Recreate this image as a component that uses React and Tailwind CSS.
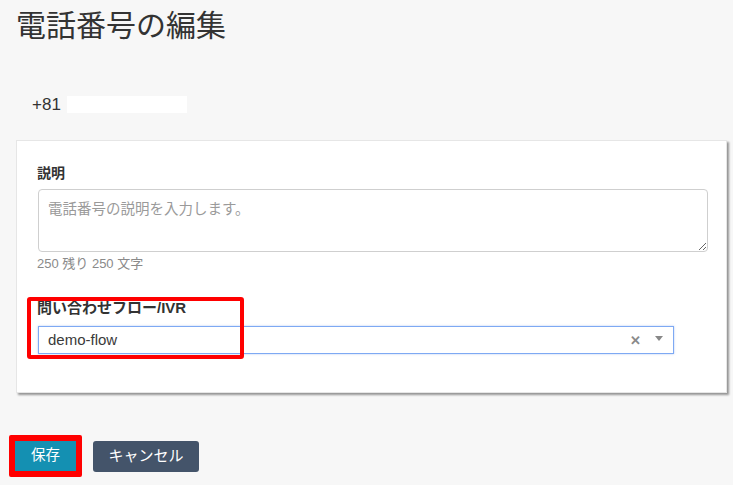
import React from 'react';

const font = "font-['Liberation_Sans','Noto_Sans_CJK_JP',sans-serif]";

const App = () => {
  return (
    <div className={`min-h-screen bg-[#f7f7f7] text-[#333] ${font} pt-[6px]`}>
      {/* ─── TITLE ─── */}
      <h1 className="pl-[16px] text-[30px] leading-[40px] font-normal text-[#333]">電話番号の編集</h1>

      {/* phone number, masked */}
      <div className="mt-[50px] pl-[32px] flex items-center gap-[6px] h-[17px]">
        <span className="text-[17px] leading-[17px] text-[#333]">+81</span>
        <div className="w-[120px] h-[17px] bg-white" />
      </div>

      {/* ─── CARD ─── */}
      <div className="relative ml-[16px] mt-[27px] w-[711px] h-[253px] bg-white border border-[#e6e6e6] shadow-[2px_2px_2px_rgba(0,0,0,0.4)] pl-[20px] pt-[22px]">
        <label className="block text-[14px] leading-[20px] font-bold text-[#333]">説明</label>
        <textarea
          className="mt-[6px] ml-[1px] block w-[670px] h-[63px] border border-[#cfcfcf] rounded-[4px] px-[9px] py-[9px] text-[14.5px] leading-[20px] placeholder:text-[#9a9a9a] outline-none"
          placeholder="電話番号の説明を入力します。"
        />
        <div className="mt-[3px] text-[13px] leading-[18px] text-[#8a8a8a]">250 残り 250 文字</div>

        <label className="block mt-[25px] text-[15px] leading-[20px] font-bold text-[#333]">問い合わせフロー/IVR</label>
        <div className="mt-[8px] ml-[1px] w-[636px] h-[28px] border border-[#7ea9f3] shadow-[0_0_2px_rgba(110,150,230,0.5)] flex items-center pl-[9px] pr-[10px]">
          <span className="flex-1 text-[15px] text-[#3a3a3a]">demo-flow</span>
          <span className="text-[#8a8a8a] text-[13px] font-bold leading-none mr-[14px]">✕</span>
          <svg width="8" height="6" viewBox="0 0 8 6" className="mb-[3px]">
            <path d="M0 0 L8 0 L4 5 Z" fill="#888" />
          </svg>
        </div>

        {/* annotation */}
        <div className="absolute left-[10px] top-[156px] w-[217px] h-[62px] border-[4px] border-[#ff0000] rounded-[3px] pointer-events-none" />
      </div>

      {/* ─── ACTIONS ─── */}
      <div className="mt-[42px] ml-[9px] flex items-center gap-[11px]">
        <div className="border-[6px] border-[#ff0000] rounded-[2px]">
          <button className="w-[61px] h-[30px] bg-[#1490b2] text-white text-[14.5px]">保存</button>
        </div>
        <button className="w-[106px] h-[31px] bg-[#44546a] rounded-[3px] text-white text-[15px]">キャンセル</button>
      </div>
    </div>
  );
};

export default App;
